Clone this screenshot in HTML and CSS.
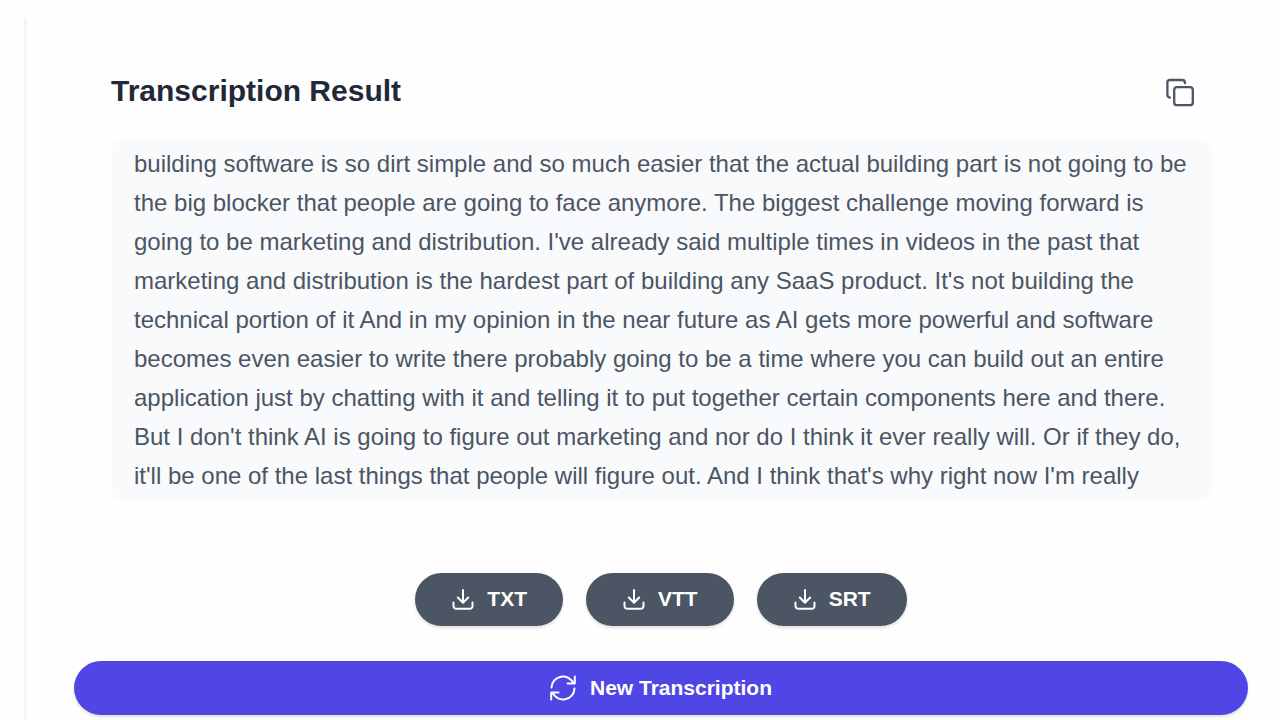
FILE: index.html
```html
<!DOCTYPE html>
<html lang="en">
<head>
<meta charset="utf-8">
<meta name="viewport" content="width=device-width, initial-scale=1">
<title>Transcription Result</title>
<link rel="stylesheet" href="styles.css">
</head>
<body>
<svg class="symbols" aria-hidden="true">
  <symbol id="download" viewBox="0 0 22 22">
    <path d="M1.500 14.500v3.500a2.800 2.800 0 0 0 2.800 2.800h13.400a2.800 2.800 0 0 0 2.800-2.800V14.500M11 2v12.500M5.800 9.500l5.200 5.200 5.200-5.200"/>
  </symbol>
</svg>
<main class="card">
  <section class="result">
    <header class="result-header">
      <h1 class="title">Transcription Result</h1>
      <button class="copy" type="button" aria-label="Copy transcription">
        <svg class="copy-icon" viewBox="0 0 30 30" aria-hidden="true">
          <path d="M5 19.600C3.300 19.200 2.400 18.500 2.400 17V4.600A2.600 2.600 0 0 1 5 2h12.200C19 2 20 3.200 20 5.200"/>
          <rect x="9.200" y="9.200" width="18.600" height="18" rx="2.800"/>
        </svg>
      </button>
    </header>
    <p class="transcript">building software is so dirt simple and so much easier that the actual building part is not going to be the big blocker that people are going to face anymore. The biggest challenge moving forward is going to be marketing and distribution. I've already said multiple times in videos in the past that marketing and distribution is the hardest part of building any SaaS product. It's not building the technical portion of it And in my opinion in the near future as AI gets more powerful and software becomes even easier to write there probably going to be a time where you can build out an entire application just by chatting with it and telling it to put together certain components here and there. But I don't think AI is going to figure out marketing and nor do I think it ever really will. Or if they do, it'll be one of the last things that people will figure out. And I think that's why right now I'm really</p>
  </section>
  <div class="downloads">
    <button class="pill download" type="button"><svg class="download-icon" aria-hidden="true"><use href="#download"/></svg>TXT</button>
    <button class="pill download" type="button"><svg class="download-icon" aria-hidden="true"><use href="#download"/></svg>VTT</button>
    <button class="pill download" type="button"><svg class="download-icon" aria-hidden="true"><use href="#download"/></svg>SRT</button>
  </div>
  <button class="pill restart" type="button">
    <svg class="restart-icon" viewBox="0 0 26 26" aria-hidden="true">
      <path d="M1.500 12.500A11.500 11.500 0 0 1 23.500 8.300M24.800 1.500V8.500h-7.300M24.500 13.500A11.500 11.500 0 0 1 2.500 17.700M1.200 24.500V17.500h7.300"/>
    </svg>New Transcription
  </button>
</main>
</body>
</html>
```
FILE: styles.css
```css
* {
  box-sizing: border-box;
}

body {
  margin: 0;
  background: #fefefe;
  font-family: "Liberation Sans", Arial, sans-serif;
}

.symbols {
  display: none;
}

.card {
  display: flex;
  flex-direction: column;
  margin: 18px 0 0 24px;
  padding: 52px 32px 5px 47px;
  border-left: 3px solid #f6f6f7;
}

.result {
  padding: 0 36px 0 37px;
}

.result-header {
  display: flex;
  align-items: flex-start;
  justify-content: space-between;
  height: 44px;
  margin-bottom: 26px;
  padding-right: 17px;
}

.title {
  margin: 0;
  color: #1f2937;
  font-size: 30px;
  line-height: 42px;
}

.copy {
  display: flex;
  margin-top: 8px;
  padding: 0;
  border: 0;
  background: none;
  color: #4b5563;
}

svg {
  fill: none;
  stroke: currentColor;
  stroke-width: 2;
  stroke-linecap: round;
  stroke-linejoin: round;
}

.copy-icon {
  width: 30px;
  height: 30px;
  stroke-width: 2.3;
}

.transcript {
  margin: 0;
  padding: 4px 23px 5px;
  border-radius: 12px;
  background: #f9fafc;
  color: #4b5563;
  font-size: 24px;
  line-height: 39px;
}

.downloads {
  display: flex;
  justify-content: center;
  gap: 23px;
  margin: 73px 0 35px;
}

.pill {
  display: flex;
  align-items: center;
  justify-content: center;
  gap: 14px;
  border: 0;
  border-radius: 27px;
  color: #fff;
  font-family: inherit;
  font-size: 21px;
  font-weight: 700;
  line-height: 24px;
  box-shadow: 0 2px 3px rgb(0 0 0 / 12%);
}

.download {
  gap: 13px;
  height: 53px;
  padding: 0 36px 2px 37px;
  background: #4b5563;
}

.download-icon {
  width: 22px;
  height: 22px;
}

.restart {
  height: 54px;
  background: #4f46e5;
}

.restart-icon {
  width: 26px;
  height: 26px;
}
```
